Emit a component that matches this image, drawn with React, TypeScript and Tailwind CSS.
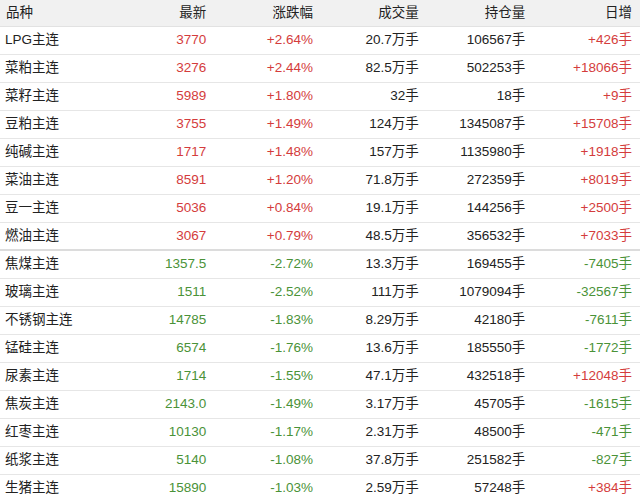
import React from "react";

type Row = [string, string, string, string, string, string];

const rows: Row[] = [
  ["LPG主连", "3770", "+2.64%", "20.7万手", "106567手", "+426手"],
  ["菜粕主连", "3276", "+2.44%", "82.5万手", "502253手", "+18066手"],
  ["菜籽主连", "5989", "+1.80%", "32手", "18手", "+9手"],
  ["豆粕主连", "3755", "+1.49%", "124万手", "1345087手", "+15708手"],
  ["纯碱主连", "1717", "+1.48%", "157万手", "1135980手", "+1918手"],
  ["菜油主连", "8591", "+1.20%", "71.8万手", "272359手", "+8019手"],
  ["豆一主连", "5036", "+0.84%", "19.1万手", "144256手", "+2500手"],
  ["燃油主连", "3067", "+0.79%", "48.5万手", "356532手", "+7033手"],
  ["焦煤主连", "1357.5", "-2.72%", "13.3万手", "169455手", "-7405手"],
  ["玻璃主连", "1511", "-2.52%", "111万手", "1079094手", "-32567手"],
  ["不锈钢主连", "14785", "-1.83%", "8.29万手", "42180手", "-7611手"],
  ["锰硅主连", "6574", "-1.76%", "13.6万手", "185550手", "-1772手"],
  ["尿素主连", "1714", "-1.55%", "47.1万手", "432518手", "+12048手"],
  ["焦炭主连", "2143.0", "-1.49%", "3.17万手", "45705手", "-1615手"],
  ["红枣主连", "10130", "-1.17%", "2.31万手", "48500手", "-471手"],
  ["纸浆主连", "5140", "-1.08%", "37.8万手", "251582手", "-827手"],
  ["生猪主连", "15890", "-1.03%", "2.59万手", "57248手", "+384手"],
];

const colorOf = (s: string) =>
  s.startsWith("-") ? "text-[#4a9238]" : "text-[#d43c3c]";

export default function App() {
  return (
    <div
      className="w-[640px] h-[495px] overflow-hidden bg-white text-[13.5px] text-[#222]"
      style={{ fontFamily: '"Liberation Sans", "Noto Sans CJK SC", sans-serif' }}
    >
      <div className="grid grid-cols-6 h-[27px] items-center bg-[#f1f1f1] border-b border-[#e2e2e2]">
        <div className="pl-[6px]">品种</div>
        <div className="text-right pr-[7px]">最新</div>
        <div className="text-right pr-[7px]">涨跌幅</div>
        <div className="text-right pr-[8px]">成交量</div>
        <div className="text-right pr-[8px]">持仓量</div>
        <div className="text-right pr-[8px]">日增</div>
      </div>
      {rows.map((r, i) => {
        const c = colorOf(r[2]);
        const sep =
          i === 7
            ? "border-b-2 border-[#dcdcdc]"
            : "border-b border-[#e6e6e6]";
        return (
          <div
            key={i}
            className={`grid grid-cols-6 h-[28px] items-center ${sep}`}
          >
            <div className="pl-[5px]">{r[0]}</div>
            <div className={`text-right pr-[7px] ${c}`}>{r[1]}</div>
            <div className={`text-right pr-[7px] ${c}`}>{r[2]}</div>
            <div className="text-right pr-[8px]">{r[3]}</div>
            <div className="text-right pr-[8px]">{r[4]}</div>
            <div className={`text-right pr-[8px] ${colorOf(r[5])}`}>{r[5]}</div>
          </div>
        );
      })}
    </div>
  );
}
